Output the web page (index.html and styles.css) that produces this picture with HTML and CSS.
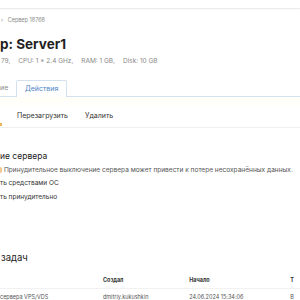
FILE: index.html
```html
<!DOCTYPE html>
<html lang="ru">
<head>
<meta charset="utf-8">
<link rel="stylesheet" href="styles.css">
</head>
<body>
<div class="topbar"></div>
<div class="page">
  <div class="crumbs"><span class="chev">›</span> Сервер 18768</div>
  <h1 class="title">р: Server1</h1>
  <div class="specs"><span>79,</span><span>CPU: 1 * 2.4 GHz,</span><span>RAM: 1 GB,</span><span>Disk: 10 GB</span></div>
  <div class="tabs">
    <div class="tab">ие</div>
    <div class="tab active">Действия</div>
  </div>
  <div class="actions">
    <span class="dot"></span>
    <span class="act">Перезагрузить</span>
    <span class="act">Удалить</span>
  </div>
  <h2 class="section">ие сервера</h2>
  <div class="warn"><span class="wicon"></span>Принудительное выключение сервера может привести к потере несохранённых данных.</div>
  <div class="opt">ть средствами ОС</div>
  <div class="opt">ть принудительно</div>
  <h2 class="tasks">задач</h2>
  <div class="table">
    <div class="row head"><span class="c1"></span><span class="c2">Создал</span><span class="c3">Начало</span><span class="c4">Т</span></div>
    <div class="row"><span class="c1">сервера VPS/VDS</span><span class="c2">dmitriy.kukushkin</span><span class="c3">24.06.2024 15:34:06</span><span class="c4">В</span></div>
  </div>
</div>
</body>
</html>
```
FILE: styles.css
```css
html, body { margin: 0; padding: 0; background: #fff; }
body { font-family: Inter, "Noto Sans", sans-serif; color: #222; width: 300px; height: 300px; overflow: hidden; }
.topbar { height: 8px; border-bottom: 1px solid #ececec; box-shadow: 0 1px 2px rgba(0,0,0,0.03); }
.page { padding-left: 1px; }
.crumbs { font-size: 5.5px; color: #8a8a8a; margin-top: 7px; height: 8px; line-height: 8px; }
.chev { margin-right: 3px; }
.title { font-size: 13.5px; font-weight: 700; margin: 12px 0 0 -1px; line-height: 16px; color: #1f1f1f; }
.specs { font-size: 6.5px; color: #8a8a8a; margin-top: 5px; display: flex; gap: 8px; line-height: 8px; margin-left: 0; }
.tabs { display: flex; margin-top: 15px; border-bottom: 1px solid #d3e1ef; height: 16px; margin-left: -1px; }
.tab { font-size: 7px; color: #8a8a8a; padding: 0 6px 0 0; line-height: 16px; width: 9px; }
.tab.active { color: #4c83c6; border: 1px solid #d3e1ef; border-bottom: none; border-radius: 2px 2px 0 0; padding: 0 8px; width: auto; background: #fff; margin-bottom: -1px; height: 16px; margin-left: 1px; }
.actions { display: flex; align-items: center; height: 24px; border-bottom: 1px solid #efefef; background: linear-gradient(#fffef6, #fff 40%); font-size: 7px; color: #333; padding-top: 6px; box-sizing: content-box; margin-left: -1px; }
.dot { width: 2px; height: 3px; background: #f2b35a; align-self: flex-end; margin-bottom: 1px; margin-right: 15px; }
.act { margin-right: 17px; }
.section { font-size: 8.5px; font-weight: 400; margin: 23px 0 0 -1px; line-height: 10px; color: #222; }
.warn { font-size: 6.55px; color: #555; margin-top: 4px; line-height: 10px; display: flex; align-items: center; margin-left: -1px; white-space: nowrap; }
.wicon { width: 2px; height: 6px; background: #f0c890; margin-right: 2px; border-radius: 0 2px 2px 0; }
.opt { font-size: 6.5px; color: #333; margin-top: 3px; line-height: 10px; margin-left: -1px; }
.opt + .opt { margin-top: 4px; }
.tasks { font-size: 9.5px; font-weight: 400; margin: 50px 0 0 0; line-height: 12px; color: #222; }
.table { margin-top: 8px; margin-left: -1px; }
.row { display: flex; font-size: 5.5px; height: 16px; align-items: center; border-bottom: 1px solid #f1f1f1; color: #555; white-space: nowrap; }
.row.head { font-weight: 700; color: #333; }
.c1 { width: 105px; }
.c2 { width: 88px; }
.c3 { width: 103px; }
.c4 { width: 10px; }
```
